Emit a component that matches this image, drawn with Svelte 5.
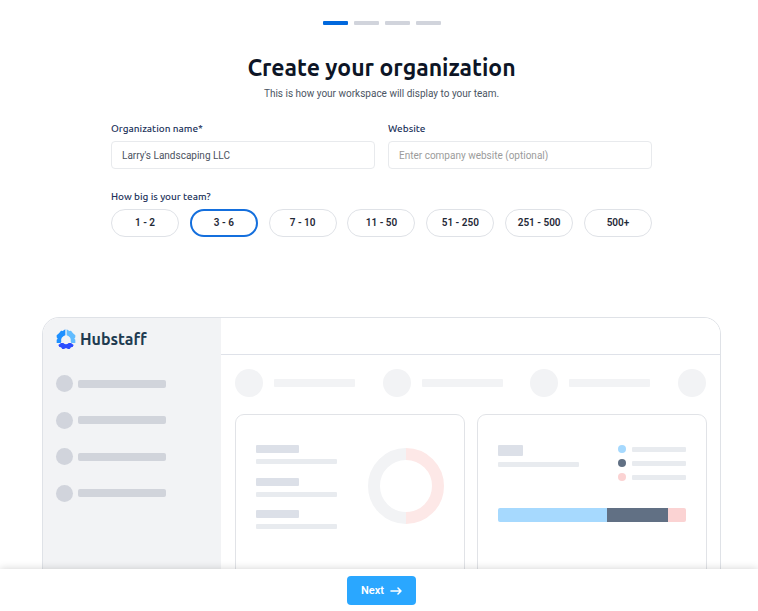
<script>
  const steps = [1, 2, 3, 4];
  const sizes = ['1 - 2', '3 - 6', '7 - 10', '11 - 50', '51 - 250', '251 - 500', '500+'];
  const legend = ['sky', 'slate', 'rose'];

  let step = $state(1);
  let name = $state("Larry's Landscaping LLC");
  let website = $state('');
  let size = $state('3 - 6');
</script>

<div class="page">
  <main>
    <div class="steps" role="progressbar" aria-label="Setup progress" aria-valuemin="1" aria-valuemax="4" aria-valuenow={step}>
      {#each steps as s}
        <span class:active={s === step}></span>
      {/each}
    </div>

    <h1>Create your organization</h1>
    <p class="lead">This is how your workspace will display to your team.</p>

    <form id="org">
      <div class="fields">
        <div class="field">
          <label for="org-name">Organization name*</label>
          <input id="org-name" type="text" bind:value={name} />
        </div>
        <div class="field">
          <label for="org-site">Website</label>
          <input id="org-site" type="text" placeholder="Enter company website (optional)" bind:value={website} />
        </div>
      </div>

      <fieldset>
        <legend>How big is your team?</legend>
        <div class="pills">
          {#each sizes as option}
            <label class="pill" class:selected={option === size}>
              <input type="radio" name="team-size" value={option} bind:group={size} />
              {option}
            </label>
          {/each}
        </div>
      </fieldset>
    </form>

    <section class="preview">
      <aside>
        <div class="brand">
          <svg width="20" height="20" viewBox="0 0 60 60" aria-hidden="true">
            <path fill="#1e90ff" d="M15 5l5 1 8-5v18c-9 3-14 10-12 18l-2 5H2V32l3-3-3-4v-6l7-6z" />
            <path fill="#62bcff" d="M45 5l-5 1-8-5v18c9 3 14 10 12 18l2 5h12V32l-3-3 3-4v-6l-7-6z" />
            <path fill="#2b4dff" d="M7 48l8-6h7c5 5 11 5 16 0h7l8 6-3 6-5 1-4 5h-5l-6-3-6 3h-5l-4-5-5-1z" />
          </svg>
          <span>Hubstaff</span>
        </div>
        <ul>
          {#each [1, 2, 3, 4] as item (item)}
            <li><i class="dot"></i><i class="bar"></i></li>
          {/each}
        </ul>
      </aside>
      <div class="body">
        <div class="topbar"></div>
        <div class="people">
          <div><i class="avatar"></i><i class="bar"></i></div>
          <div><i class="avatar"></i><i class="bar"></i></div>
          <div><i class="avatar"></i><i class="bar"></i></div>
          <div><i class="avatar"></i></div>
        </div>
        <div class="cards">
          <div class="card activity">
            <div class="rows">
              {#each [1, 2, 3] as row (row)}
                <div><i class="block"></i><i class="line"></i></div>
              {/each}
            </div>
            <svg width="76" height="76" viewBox="0 0 76 76" fill="none" stroke-width="12" aria-hidden="true">
              <path stroke="#f2f3f5" d="M38 70a32 32 0 0 1 0-64" />
              <path stroke="#fde8e7" d="M38 6a32 32 0 0 1 0 64" />
            </svg>
          </div>
          <div class="card budget">
            <div class="summary">
              <div><i class="block"></i><i class="line"></i></div>
              <div class="legend">
                {#each legend as tone}
                  <div><i class="key {tone}"></i><i class="line"></i></div>
                {/each}
              </div>
            </div>
            <div class="stack">
              <i class="sky"></i><i class="slate"></i><i class="rose"></i>
            </div>
          </div>
        </div>
      </div>
    </section>
  </main>

  <footer>
    <button type="submit" form="org">
      Next
      <svg width="12" height="10" viewBox="0 0 12 10" fill="none" stroke="currentColor" stroke-width="1.5" stroke-linecap="round" stroke-linejoin="round" aria-hidden="true">
        <path d="M1 5h10M8 2l3 3-3 3" />
      </svg>
    </button>
  </footer>
</div>

<style>
  :global(body) {
    margin: 0;
    background: #fff;
  }
  .page, .page * {
    box-sizing: border-box;
  }
  .page {
    display: flex;
    flex-direction: column;
    height: 100vh;
    overflow: hidden;
    font-family: Roboto, sans-serif;
    font-size: 10px;
    line-height: 12px;
    color: #4b5563;
  }
  main {
    flex: 1;
    min-height: 0;
    overflow: hidden;
    display: flex;
    flex-direction: column;
    align-items: center;
    padding: 21px 0 0 5px;
  }
  main > * {
    flex-shrink: 0;
  }
  i {
    display: block;
    flex-shrink: 0;
  }
  .steps {
    display: flex;
    gap: 6px;
  }
  .steps span {
    width: 25px;
    height: 4px;
    border-radius: 1px;
    background: #d1d4dc;
  }
  .steps span.active {
    background: #0168dd;
  }
  h1 {
    margin: 28px 0 0;
    font: 700 23px/30px Ubuntu, "Noto Sans", sans-serif;
    color: #0d1526;
  }
  .lead {
    margin: 5px 0 0;
  }
  form {
    width: 100%;
    max-width: 541px;
    margin-top: 22px;
  }
  .fields {
    display: flex;
    gap: 13px;
  }
  .field {
    flex: 1;
    display: flex;
    flex-direction: column;
    gap: 5px;
  }
  .field label, legend {
    font: 500 10px/14px Ubuntu, "Noto Sans", sans-serif;
    color: #22325a;
  }
  .field input {
    width: 100%;
    height: 28px;
    padding: 0 10px;
    border: 1px solid #e8eaed;
    border-radius: 4px;
    background: #fff;
    font: 10px/12px Roboto, sans-serif;
    color: #4b5260;
  }
  .field input::placeholder {
    color: #9b9b9b;
    opacity: 1;
  }
  fieldset {
    min-width: 0;
    margin: 21px 0 0;
    padding: 0;
    border: 0;
  }
  legend {
    padding: 0;
  }
  .pills {
    display: flex;
    justify-content: space-between;
    margin-top: 5px;
  }
  .pill {
    position: relative;
    display: flex;
    align-items: center;
    justify-content: center;
    width: 68px;
    height: 28px;
    border: 1px solid #dfe2e7;
    border-radius: 14px;
    font-weight: 600;
    color: #1f2937;
    cursor: pointer;
  }
  .pill.selected {
    border: 2px solid #146fdd;
  }
  .pill input {
    position: absolute;
    inset: 0;
    width: 100%;
    height: 100%;
    margin: 0;
    opacity: 0;
    cursor: pointer;
  }
  .preview {
    display: flex;
    width: 100%;
    max-width: 679px;
    margin-top: 80px;
    border: 1px solid #dfe2e7;
    border-radius: 17px;
    overflow: hidden;
  }
  aside {
    width: 178px;
    padding: 11px 13px;
    background: #f2f3f5;
  }
  .brand {
    display: flex;
    align-items: center;
    gap: 4px;
    height: 20px;
    font: 700 16px/20px Ubuntu, "Noto Sans", sans-serif;
    color: #203a50;
  }
  ul {
    display: flex;
    flex-direction: column;
    justify-content: space-between;
    height: 127px;
    margin: 26px 0 0;
    padding: 0;
    list-style: none;
  }
  li {
    display: flex;
    align-items: center;
    gap: 5px;
  }
  .dot {
    width: 17px;
    height: 17px;
    border-radius: 50%;
    background: #d1d4dc;
  }
  li .bar {
    width: 88px;
    height: 8px;
    border-radius: 2px;
    background: #d1d4db;
  }
  .body {
    flex: 1;
    min-width: 0;
    background: #fff;
  }
  .topbar {
    height: 37px;
    border-bottom: 1px solid #dfe2e9;
  }
  .people {
    display: flex;
    justify-content: space-between;
    padding: 14px 14px 0;
  }
  .people > div {
    display: flex;
    align-items: center;
    gap: 11px;
  }
  .avatar {
    width: 28px;
    height: 28px;
    border-radius: 50%;
    background: #f2f3f5;
  }
  .people .bar {
    width: 81px;
    height: 8px;
    border-radius: 1px;
    background: #f2f3f5;
  }
  .cards {
    display: flex;
    gap: 12px;
    padding: 17px 13px 0 14px;
  }
  .card {
    flex: 1;
    height: 190px;
    padding: 30px 20px;
    border: 1px solid #e1e3e7;
    border-radius: 9px;
  }
  .activity {
    display: flex;
    justify-content: space-between;
    align-items: flex-start;
  }
  .activity svg {
    margin-top: 3px;
  }
  .rows {
    display: flex;
    flex-direction: column;
    justify-content: space-between;
    height: 84px;
  }
  .block {
    width: 43px;
    height: 8px;
    margin-bottom: 6px;
    border-radius: 1px;
    background: #dce0e8;
  }
  .line {
    width: 81px;
    height: 5px;
    border-radius: 1px;
    background: #e8ebef;
  }
  .summary {
    display: flex;
    justify-content: space-between;
  }
  .budget .block {
    width: 25px;
    height: 11px;
  }
  .legend {
    display: flex;
    flex-direction: column;
    justify-content: space-between;
    height: 36px;
  }
  .legend > div {
    display: flex;
    align-items: center;
    gap: 6px;
  }
  .legend .line {
    width: 54px;
  }
  .key {
    width: 8px;
    height: 8px;
    border-radius: 50%;
  }
  .sky {
    background: #a6d9fe;
  }
  .slate {
    background: #617084;
  }
  .rose {
    background: #fbd3d3;
  }
  .stack {
    display: flex;
    height: 14px;
    margin-top: 27px;
    border-radius: 2px;
    overflow: hidden;
  }
  .stack .sky {
    flex: 109;
  }
  .stack .slate {
    flex: 61;
  }
  .stack .rose {
    flex: 18;
  }
  footer {
    position: relative;
    flex-shrink: 0;
    display: flex;
    justify-content: center;
    padding: 7px 0 6px 5px;
    background: #fff;
    box-shadow: 0 0 8px rgba(0, 0, 0, 0.18);
  }
  button {
    display: flex;
    align-items: center;
    justify-content: center;
    gap: 6px;
    width: 69px;
    height: 29px;
    padding: 0;
    border: 0;
    border-radius: 4px;
    background: #2aa7ff;
    font: 600 11px/14px Roboto, sans-serif;
    color: #fff;
    cursor: pointer;
  }
</style>
